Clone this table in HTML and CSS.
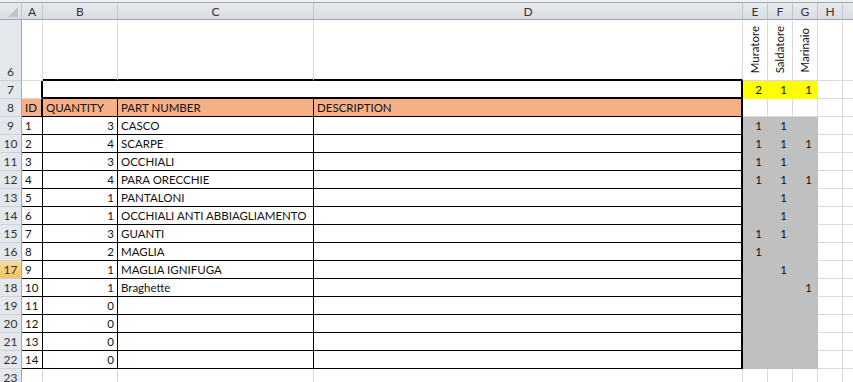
FILE: index.html
```html
<!DOCTYPE html>
<html>
<head>
    <title>Dotazioni DPI</title>
    <link rel="stylesheet" href="styles.css">
</head>
<body>
    <div class="sheet-wrap">
        <table class="sheet">
            <colgroup>
                <col class="c-rh"><col class="c-a"><col class="c-b"><col class="c-c"><col class="c-d">
                <col class="c-role"><col class="c-role"><col class="c-role"><col class="c-role"><col class="c-i">
            </colgroup>
            <tr class="cols">
                <th class="corner"><svg width="12" height="12" viewBox="0 0 12 12"><polygon points="11,1 11,11 1,11" fill="#bfc4cb"/></svg></th>
                <th>A</th><th>B</th><th>C</th><th>D</th><th>E</th><th>F</th><th>G</th><th>H</th><th></th>
            </tr>
            <tr class="tall">
                <th class="rh">6</th><td></td><td class="top"></td><td class="top"></td><td class="top"></td>
                <td class="role"><span>Muratore</span></td><td class="role"><span>Saldatore</span></td><td class="role"><span>Marinaio</span></td><td></td><td></td>
            </tr>
            <tr>
                <th class="rh">7</th><td class="edge"></td><td class="box" colspan="3"></td>
                <td class="mark num">2</td><td class="mark num">1</td><td class="mark num">1</td><td></td><td></td>
            </tr>
            <tr>
                <th class="rh">8</th><td class="head ln edge">ID</td><td class="head ln">QUANTITY</td><td class="head ln">PART NUMBER</td><td class="head ln edge">DESCRIPTION</td>
                <td></td><td></td><td></td><td></td><td></td>
            </tr>
            <tr>
                <th class="rh">9</th><td class="ln">1</td><td class="ln num">3</td><td class="ln">CASCO</td><td class="ln edge"></td>
                <td class="fill num">1</td><td class="fill num">1</td><td class="fill num"></td><td></td><td></td>
            </tr>
            <tr>
                <th class="rh">10</th><td class="ln">2</td><td class="ln num">4</td><td class="ln">SCARPE</td><td class="ln edge"></td>
                <td class="fill num">1</td><td class="fill num">1</td><td class="fill num">1</td><td></td><td></td>
            </tr>
            <tr>
                <th class="rh">11</th><td class="ln">3</td><td class="ln num">3</td><td class="ln">OCCHIALI</td><td class="ln edge"></td>
                <td class="fill num">1</td><td class="fill num">1</td><td class="fill num"></td><td></td><td></td>
            </tr>
            <tr>
                <th class="rh">12</th><td class="ln">4</td><td class="ln num">4</td><td class="ln">PARA ORECCHIE</td><td class="ln edge"></td>
                <td class="fill num">1</td><td class="fill num">1</td><td class="fill num">1</td><td></td><td></td>
            </tr>
            <tr>
                <th class="rh">13</th><td class="ln">5</td><td class="ln num">1</td><td class="ln">PANTALONI</td><td class="ln edge"></td>
                <td class="fill num"></td><td class="fill num">1</td><td class="fill num"></td><td></td><td></td>
            </tr>
            <tr>
                <th class="rh">14</th><td class="ln">6</td><td class="ln num">1</td><td class="ln">OCCHIALI ANTI ABBIAGLIAMENTO</td><td class="ln edge"></td>
                <td class="fill num"></td><td class="fill num">1</td><td class="fill num"></td><td></td><td></td>
            </tr>
            <tr>
                <th class="rh">15</th><td class="ln">7</td><td class="ln num">3</td><td class="ln">GUANTI</td><td class="ln edge"></td>
                <td class="fill num">1</td><td class="fill num">1</td><td class="fill num"></td><td></td><td></td>
            </tr>
            <tr>
                <th class="rh">16</th><td class="ln">8</td><td class="ln num">2</td><td class="ln">MAGLIA</td><td class="ln edge"></td>
                <td class="fill num">1</td><td class="fill num"></td><td class="fill num"></td><td></td><td></td>
            </tr>
            <tr>
                <th class="rh active">17</th><td class="ln">9</td><td class="ln num">1</td><td class="ln">MAGLIA IGNIFUGA</td><td class="ln edge"></td>
                <td class="fill num"></td><td class="fill num">1</td><td class="fill num"></td><td></td><td></td>
            </tr>
            <tr>
                <th class="rh">18</th><td class="ln">10</td><td class="ln num">1</td><td class="ln">Braghette</td><td class="ln edge"></td>
                <td class="fill num"></td><td class="fill num"></td><td class="fill num">1</td><td></td><td></td>
            </tr>
            <tr>
                <th class="rh">19</th><td class="ln">11</td><td class="ln num">0</td><td class="ln"></td><td class="ln edge"></td>
                <td class="fill"></td><td class="fill"></td><td class="fill"></td><td></td><td></td>
            </tr>
            <tr>
                <th class="rh">20</th><td class="ln">12</td><td class="ln num">0</td><td class="ln"></td><td class="ln edge"></td>
                <td class="fill"></td><td class="fill"></td><td class="fill"></td><td></td><td></td>
            </tr>
            <tr>
                <th class="rh">21</th><td class="ln">13</td><td class="ln num">0</td><td class="ln"></td><td class="ln edge"></td>
                <td class="fill"></td><td class="fill"></td><td class="fill"></td><td></td><td></td>
            </tr>
            <tr>
                <th class="rh">22</th><td class="ln">14</td><td class="ln num">0</td><td class="ln"></td><td class="ln edge"></td>
                <td class="fill"></td><td class="fill"></td><td class="fill"></td><td></td><td></td>
            </tr>
            <tr>
                <th class="rh">23</th><td></td><td></td><td></td><td></td>
                <td></td><td></td><td></td><td></td><td></td>
            </tr>
        </table>
    </div>
</body>
</html>
```

FILE: styles.css
```css
/* Worksheet look: grey headers, light gridlines, bordered table */
body {
    margin: 0;
    background-color: white;
    font-family: Lato, "Liberation Sans", sans-serif;
    font-size: 11.5px;
    color: #111;
    overflow: hidden;
}
.sheet-wrap {
    padding-top: 2px;
    background-color: #eceef1;
}
.sheet {
    border-collapse: separate;
    border-spacing: 0;
    table-layout: fixed;
    width: 865px;
    background-color: white;
}
.c-rh { width: 22px; }
.c-a { width: 21px; }
.c-b { width: 75px; }
.c-c { width: 196px; }
.c-d { width: 429px; }
.c-role { width: 25px; }
.c-i { width: 22px; }

.sheet tr {
    height: 18px;
}
.sheet tr.tall {
    height: 61px;
}
.sheet th, .sheet td {
    box-sizing: border-box;
    padding: 0 2px 1px 3px;
    border-right: 1px solid #d9dadc;
    border-bottom: 1px solid #d9dadc;
    white-space: nowrap;
    overflow: hidden;
    font-weight: normal;
    text-align: left;
    vertical-align: bottom;
    line-height: 15px;
}

/* column letters */
.cols th {
    background: linear-gradient(#e7eaee, #d9dde3);
    border-top: 1px solid #a4a9b1;
    border-bottom: 1px solid #9ea6b0;
    border-right: 1px solid #bdc4cc;
    color: #333;
    font-size: 12px;
    text-align: center;
    vertical-align: middle;
    padding: 0;
}
.cols th.corner {
    text-align: right;
    padding: 2px 2px 0 0;
}
.corner svg {
    display: block;
    margin-left: auto;
}

/* row numbers */
.sheet th.rh {
    background-color: #e4e8ed;
    border-right: 1px solid #9ea6b0;
    border-bottom: 1px solid #cbd2da;
    color: #333;
    font-size: 12px;
    text-align: center;
    padding: 0 0 1px 0;
}
.sheet th.rh.active {
    background: linear-gradient(#fadb9c, #f2c463);
}

/* rotated role names */
.sheet td.role {
    text-align: center;
    padding: 0 0 4px 0;
}
.role span {
    display: inline-block;
    writing-mode: vertical-rl;
    transform: rotate(180deg);
    line-height: 16px;
}

/* bordered parts table */
.sheet td.top {
    border-bottom: 2px solid #000;
}
.sheet td.box {
    border-right: 2px solid #000;
    border-bottom: 2px solid #000;
}
.sheet td.ln {
    border-right-color: #000;
    border-bottom-color: #000;
}
.sheet td.edge {
    border-right: 2px solid #000;
}
.sheet td.head {
    background-color: #f5b086;
}
.sheet td.num {
    text-align: right;
    padding-right: 3px;
}

/* role matrix */
.sheet td.mark {
    background-color: #ffff00;
    border-color: #ffff00;
}
.sheet td.fill {
    background-color: #c0c0c0;
    border-color: #c0c0c0;
}
.sheet td.mark, .sheet td.fill {
    padding-right: 5px;
}
```
